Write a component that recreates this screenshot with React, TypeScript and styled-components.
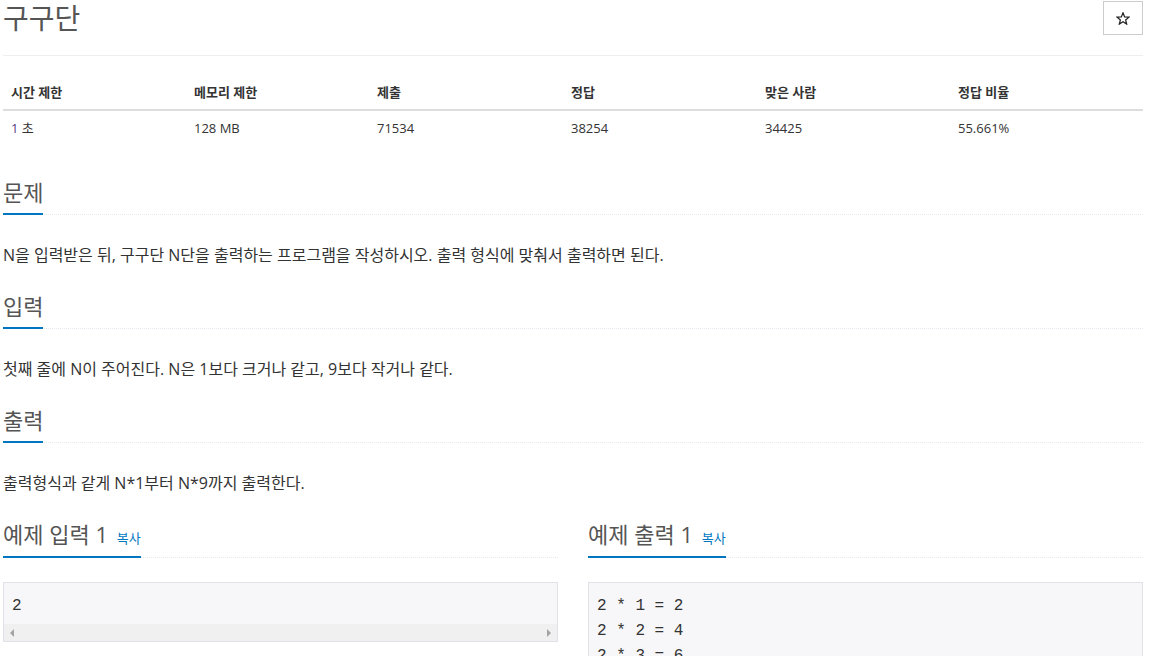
import React from "react";
import styled, { createGlobalStyle } from "styled-components";

const GlobalStyle = createGlobalStyle`
  html, body { margin: 0; padding: 0; overflow: hidden; background: #fff; }
  body {
    font-family: "Open Sans", "Noto Sans CJK KR", sans-serif;
    color: #333;
    font-size: 13px;
  }
  * { box-sizing: border-box; }
`;

const Page = styled.div`
  width: 1140px;
  margin-left: 3px;
`;

const PageHeader = styled.header`
  display: flex;
  justify-content: space-between;
  align-items: flex-start;
  height: 56px;
  border-bottom: 1px solid #eee;
`;

const Title = styled.h1`
  margin: 0;
  font-size: 28px;
  font-weight: 400;
  line-height: 36px;
  color: #555;
`;

const StarButton = styled.button`
  width: 40px;
  height: 34px;
  margin-top: 1px;
  padding: 0;
  border: 1px solid #ccc;
  border-radius: 0;
  background: #fff;
  display: flex;
  align-items: center;
  justify-content: center;
`;

const InfoTable = styled.table`
  width: 100%;
  table-layout: fixed;
  border-collapse: collapse;
  margin: 19px 0 0;
`;

const Col = styled.col<{ $w: number }>`
  width: ${(p) => p.$w}px;
`;

const Th = styled.th`
  text-align: left;
  font-weight: 700;
  font-size: 13px;
  line-height: 18px;
  padding: 8px;
  color: #333;
  border-bottom: 2px solid #ddd;
`;

const Td = styled.td`
  font-size: 13px;
  line-height: 18px;
  padding: 8px;
  color: #333;
`;

const Accent = styled.span`
  color: #5a3a86;
`;

const Section = styled.section<{ $top?: number }>`
  margin-top: ${(p) => p.$top ?? 27}px;
`;

const Headline = styled.div<{ $mb?: number }>`
  display: flex;
  border-bottom: 1px dotted #e4e9f0;
  margin-bottom: ${(p) => p.$mb ?? 28}px;
`;

const H2 = styled.h2`
  margin: 0 0 -1px;
  font-size: 22px;
  font-weight: 400;
  line-height: 24px;
  padding-bottom: 9px;
  border-bottom: 2px solid #0076c0;
  color: #555;
  white-space: nowrap;
`;

const CopyLink = styled.button`
  border: 0;
  background: none;
  padding: 0;
  margin-left: 3px;
  font-family: "Open Sans", "Noto Sans CJK KR", sans-serif;
  font-size: 13px;
  color: #0076c0;
  cursor: pointer;
`;

const Text = styled.p`
  margin: 0;
  font-size: 16px;
  line-height: 24px;
  color: #333;
`;

const SampleRow = styled.div`
  display: grid;
  grid-template-columns: 1fr 1fr;
  column-gap: 30px;
  margin-top: 27px;
`;

const SampleBox = styled.div`
  border: 1px solid #e1e1e8;
  background: #f7f7f9;
`;

const SampleText = styled.pre<{ $pb?: number }>`
  margin: 0;
  padding: 11px 8px ${(p) => p.$pb ?? 9}px;
  font-family: "Liberation Mono", "DejaVu Sans Mono", monospace;
  font-size: 16px;
  line-height: 25px;
  color: #333;
`;

const ScrollTrack = styled.div`
  height: 17px;
  background: #f0f0f0;
  display: flex;
  align-items: center;
  justify-content: space-between;
  padding: 0 6px;
`;

const Arrow = styled.span<{ $dir: "left" | "right" }>`
  width: 0;
  height: 0;
  border-top: 4px solid transparent;
  border-bottom: 4px solid transparent;
  ${(p) =>
    p.$dir === "left"
      ? "border-right: 4px solid #a3a3a3;"
      : "border-left: 4px solid #a3a3a3;"}
`;

const StarIcon = () => (
  <svg width="14" height="13" viewBox="0 0 24 23" aria-hidden="true">
    <polygon
      points="12,1.5 14.9,8.6 22.5,9.1 16.7,14 18.5,21.4 12,17.4 5.5,21.4 7.3,14 1.5,9.1 9.1,8.6"
      fill="none"
      stroke="#222"
      strokeWidth="2.2"
      strokeLinejoin="miter"
    />
  </svg>
);

const headers = ["시간 제한", "메모리 제한", "제출", "정답", "맞은 사람", "정답 비율"];
const widths = [183, 183, 194, 194, 193, 193];

const outputLines = Array.from({ length: 9 }, (_, i) => `2 * ${i + 1} = ${2 * (i + 1)}`).join("\n");

export default function App() {
  return (
    <>
      <GlobalStyle />
      <Page>
        <PageHeader>
          <Title>구구단</Title>
          <StarButton aria-label="즐겨찾기">
            <StarIcon />
          </StarButton>
        </PageHeader>

        <InfoTable>
          <colgroup>
            {widths.map((w, i) => (
              <Col key={i} $w={w} />
            ))}
          </colgroup>
          <thead>
            <tr>
              {headers.map((h) => (
                <Th key={h}>{h}</Th>
              ))}
            </tr>
          </thead>
          <tbody>
            <tr>
              <Td>
                <Accent>1</Accent> 초
              </Td>
              <Td>128 MB</Td>
              <Td>71534</Td>
              <Td>38254</Td>
              <Td>34425</Td>
              <Td>55.661%</Td>
            </tr>
          </tbody>
        </InfoTable>

        <Section $top={35}>
          <Headline>
            <H2>문제</H2>
          </Headline>
          <Text>N을 입력받은 뒤, 구구단 N단을 출력하는 프로그램을 작성하시오. 출력 형식에 맞춰서 출력하면 된다.</Text>
        </Section>

        <Section>
          <Headline>
            <H2>입력</H2>
          </Headline>
          <Text>첫째 줄에 N이 주어진다. N은 1보다 크거나 같고, 9보다 작거나 같다.</Text>
        </Section>

        <Section>
          <Headline>
            <H2>출력</H2>
          </Headline>
          <Text>출력형식과 같게 N*1부터 N*9까지 출력한다.</Text>
        </Section>

        <SampleRow>
          <div>
            <Headline $mb={24}>
              <H2>
                예제 입력 1 <CopyLink>복사</CopyLink>
              </H2>
            </Headline>
            <SampleBox>
              <SampleText $pb={5}>2</SampleText>
              <ScrollTrack>
                <Arrow $dir="left" />
                <Arrow $dir="right" />
              </ScrollTrack>
            </SampleBox>
          </div>
          <div>
            <Headline $mb={24}>
              <H2>
                예제 출력 1 <CopyLink>복사</CopyLink>
              </H2>
            </Headline>
            <SampleBox>
              <SampleText>{outputLines}</SampleText>
            </SampleBox>
          </div>
        </SampleRow>
      </Page>
    </>
  );
}
